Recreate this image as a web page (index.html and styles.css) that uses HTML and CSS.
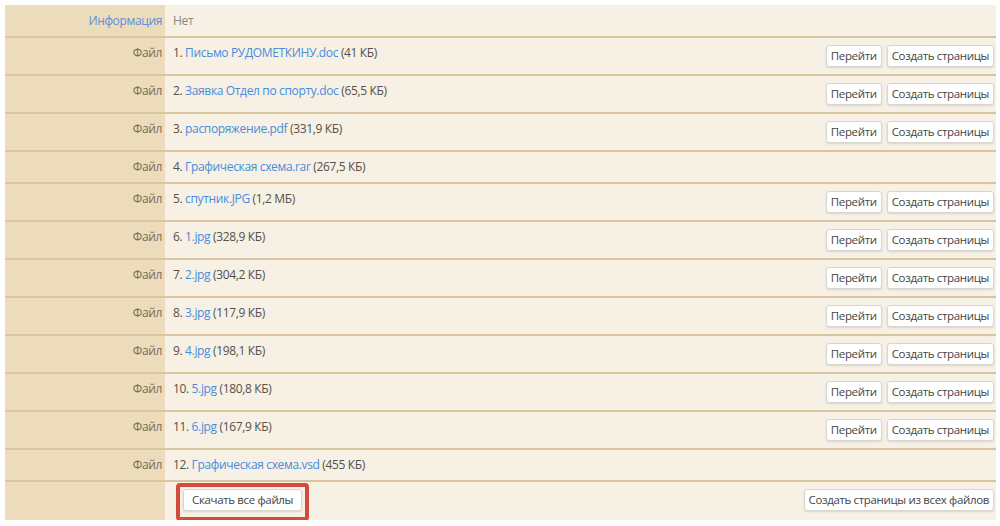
FILE: index.html
```html
<!DOCTYPE html>
<html lang="ru">
<head>
<meta charset="utf-8">
<link rel="stylesheet" href="styles.css">
</head>
<body>
<div class="wrap">
<table class="props">
  <tr class="row-info">
    <td class="lbl lbl-link">Информация</td>
    <td class="val"><span class="muted">Нет</span></td>
  </tr>
  <tr>
    <td class="lbl">Файл</td>
    <td class="val"><div class="line"><span class="file">1. <a href="#">Письмо РУДОМЕТКИНУ.doc</a> (41 КБ)</span><span class="btns"><button class="btn">Перейти</button><button class="btn">Создать страницы</button></span></div></td>
  </tr>
  <tr>
    <td class="lbl">Файл</td>
    <td class="val"><div class="line"><span class="file">2. <a href="#">Заявка Отдел по спорту.doc</a> (65,5 КБ)</span><span class="btns"><button class="btn">Перейти</button><button class="btn">Создать страницы</button></span></div></td>
  </tr>
  <tr>
    <td class="lbl">Файл</td>
    <td class="val"><div class="line"><span class="file">3. <a href="#">распоряжение.pdf</a> (331,9 КБ)</span><span class="btns"><button class="btn">Перейти</button><button class="btn">Создать страницы</button></span></div></td>
  </tr>
  <tr>
    <td class="lbl">Файл</td>
    <td class="val"><div class="line"><span class="file">4. <a href="#">Графическая схема.rar</a> (267,5 КБ)</span></div></td>
  </tr>
  <tr>
    <td class="lbl">Файл</td>
    <td class="val"><div class="line"><span class="file">5. <a href="#">спутник.JPG</a> (1,2 МБ)</span><span class="btns"><button class="btn">Перейти</button><button class="btn">Создать страницы</button></span></div></td>
  </tr>
  <tr>
    <td class="lbl">Файл</td>
    <td class="val"><div class="line"><span class="file">6. <a href="#">1.jpg</a> (328,9 КБ)</span><span class="btns"><button class="btn">Перейти</button><button class="btn">Создать страницы</button></span></div></td>
  </tr>
  <tr>
    <td class="lbl">Файл</td>
    <td class="val"><div class="line"><span class="file">7. <a href="#">2.jpg</a> (304,2 КБ)</span><span class="btns"><button class="btn">Перейти</button><button class="btn">Создать страницы</button></span></div></td>
  </tr>
  <tr>
    <td class="lbl">Файл</td>
    <td class="val"><div class="line"><span class="file">8. <a href="#">3.jpg</a> (117,9 КБ)</span><span class="btns"><button class="btn">Перейти</button><button class="btn">Создать страницы</button></span></div></td>
  </tr>
  <tr>
    <td class="lbl">Файл</td>
    <td class="val"><div class="line"><span class="file">9. <a href="#">4.jpg</a> (198,1 КБ)</span><span class="btns"><button class="btn">Перейти</button><button class="btn">Создать страницы</button></span></div></td>
  </tr>
  <tr>
    <td class="lbl">Файл</td>
    <td class="val"><div class="line"><span class="file">10. <a href="#">5.jpg</a> (180,8 КБ)</span><span class="btns"><button class="btn">Перейти</button><button class="btn">Создать страницы</button></span></div></td>
  </tr>
  <tr>
    <td class="lbl">Файл</td>
    <td class="val"><div class="line"><span class="file">11. <a href="#">6.jpg</a> (167,9 КБ)</span><span class="btns"><button class="btn">Перейти</button><button class="btn">Создать страницы</button></span></div></td>
  </tr>
  <tr>
    <td class="lbl">Файл</td>
    <td class="val"><div class="line"><span class="file">12. <a href="#">Графическая схема.vsd</a> (455 КБ)</span></div></td>
  </tr>
  <tr class="row-last">
    <td class="lbl"></td>
    <td class="val"><div class="line"><span class="highlight"><button class="btn btn-wide">Скачать все файлы</button></span><span class="btns"><button class="btn">Создать страницы из всех файлов</button></span></div></td>
  </tr>
</table>
</div>
</body>
</html>
```

FILE: styles.css
```css
html, body {
  margin: 0;
  padding: 0;
  background: #ffffff;
}
body {
  font-family: "Open Sans", "Liberation Sans", sans-serif;
  font-size: 12px;
  letter-spacing: -0.35px;
  color: #555049;
}
.wrap {
  padding: 5px 4px 0 5px;
}
.props {
  width: 991px;
  border-collapse: collapse;
  border-spacing: 0;
}
.props td {
  padding: 7px 8px 7px 8px;
  line-height: 16px;
  vertical-align: top;
  border-bottom: 2px solid #d8c59e;
}
.props tr:last-child td {
  border-bottom: none;
  padding-bottom: 9px;
}
.row-info td {
  padding-top: 8px;
  padding-bottom: 7px;
}
.lbl {
  width: 157px;
  padding-right: 3px !important;
  padding-left: 0 !important;
  text-align: right;
  background: #eddcbc;
  color: #7b6a55;
  white-space: nowrap;
}
.lbl-link {
  color: #5b8fd8;
}
.val {
  background: #f6f1e4;
  padding-right: 2px !important;
}
.muted {
  color: #8a8680;
}
.line {
  display: flex;
  align-items: flex-start;
}
.file a {
  color: #4a8bdb;
  text-decoration: none;
}
.btns {
  margin-left: auto;
  display: flex;
  gap: 5px;
}
.btn {
  font-family: "Open Sans", "Liberation Sans", sans-serif;
  font-size: 11.5px;
  letter-spacing: -0.35px;
  line-height: 16px;
  color: #444;
  background: #ffffff;
  border: 1px solid #d9d6d0;
  border-radius: 3px;
  padding: 2px 4px;
  margin: 0;
  box-shadow: 0 1px 2px rgba(0,0,0,0.12);
  cursor: pointer;
  white-space: nowrap;
}
.btn-wide {
  padding: 2px 8px;
}
.highlight {
  position: relative;
  margin-left: 10px;
  display: inline-flex;
}
.highlight::after {
  content: "";
  position: absolute;
  left: -7px;
  right: -7px;
  top: -6px;
  bottom: -10px;
  border: 4px solid #d34b3c;
  border-radius: 4px;
  pointer-events: none;
}
```
